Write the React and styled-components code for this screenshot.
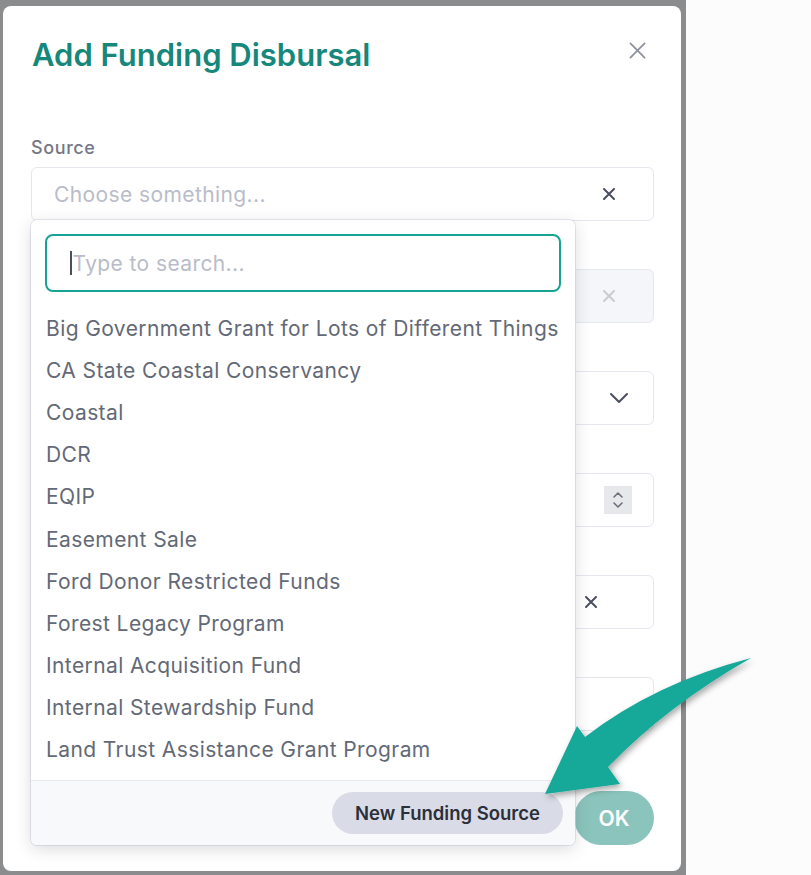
import React from 'react';
import styled, { createGlobalStyle } from 'styled-components';

const GlobalStyle = createGlobalStyle`
  html, body {
    margin: 0;
    padding: 0;
    background: #fcfcfc;
    font-family: Inter, "Noto Sans", sans-serif;
  }
  * { box-sizing: border-box; }
`;

const Page = styled.div`
  position: relative;
  display: flex;
  width: 811px;
  height: 875px;
  overflow: hidden;
`;

const Backdrop = styled.div`
  width: 686px;
  height: 875px;
  background: #8b8c8e;
  padding: 6px 5px 4px 3px;
`;

const Modal = styled.div`
  position: relative;
  height: 100%;
  background: #ffffff;
  border-radius: 8px;
  padding: 0 27px 0 28px;
  display: flex;
  flex-direction: column;
`;

const Header = styled.div`
  display: flex;
  justify-content: space-between;
  align-items: flex-start;
  padding: 30px 0 0 1px;
  height: 74px;
`;

const Title = styled.h1`
  margin: 0;
  font-size: 31px;
  line-height: 38px;
  font-weight: 600;
  color: #16877a;
`;

const CloseButton = styled.button`
  border: none;
  background: transparent;
  padding: 0;
  margin: 2px 5px 0 0;
  width: 24px;
  height: 24px;
  display: flex;
  align-items: center;
  justify-content: center;
  cursor: pointer;
`;

const Form = styled.div`
  display: flex;
  flex-direction: column;
  gap: 20px;
  padding-top: 59px;
`;

const Field = styled.div`
  display: flex;
  flex-direction: column;
  gap: 10px;
`;

const Label = styled.label`
  min-height: 18px;
  font-size: 18px;
  font-weight: 500;
  color: #747886;
  letter-spacing: 0.6px;
  line-height: 18px;
`;

const InputBox = styled.div`
  height: 54px;
  border: 1px solid #e6e7ee;
  border-radius: 6px;
  background: ${p => (p.disabled ? '#f5f6f9' : '#ffffff')};
  display: flex;
  align-items: center;
  justify-content: space-between;
  padding: 0 ${p => p.padRight || 38}px 0 22px;
`;

const Placeholder = styled.span`
  font-size: 21px;
  letter-spacing: 0.4px;
  color: #b9bcc9;
`;

const Spinner = styled.div`
  width: 28px;
  height: 28px;
  background: #e7e8ec;
  display: flex;
  flex-direction: column;
  align-items: center;
  justify-content: center;
  gap: 2px;
`;

const Footer = styled.div`
  margin-top: auto;
  display: flex;
  justify-content: flex-end;
  padding-bottom: 26px;
`;

const OkButton = styled.button`
  width: 80px;
  height: 54px;
  border: none;
  border-radius: 27px;
  background: #8bc4bc;
  color: #ffffff;
  font-family: inherit;
  font-size: 21px;
  font-weight: 600;
`;

const Popover = styled.div`
  position: absolute;
  left: 28px;
  top: 214px;
  width: 544px;
  height: 625px;
  background: #ffffff;
  border-radius: 6px;
  box-shadow: 0 4px 16px rgba(40, 44, 60, 0.17), 0 0 0 1px rgba(220, 222, 232, 0.6);
  display: flex;
  flex-direction: column;
  overflow: hidden;
`;

const SearchWrap = styled.div`
  padding: 14px 14px 15px 14px;
`;

const SearchInput = styled.div`
  height: 58px;
  border: 2px solid #17a394;
  border-radius: 8px;
  display: flex;
  align-items: center;
  padding-left: 23px;
  font-size: 21px;
  letter-spacing: 0.4px;
  color: #b9bcc9;
`;

const Caret = styled.span`
  display: inline-block;
  width: 1.5px;
  height: 24px;
  background: #4a4f5c;
  margin-right: 1px;
`;

const OptionList = styled.ul`
  list-style: none;
  margin: 0;
  padding: 0 0 9px 0;
  flex: 1;
`;

const Option = styled.li`
  height: 42.2px;
  display: flex;
  align-items: center;
  padding-left: 15px;
  font-size: 21px;
  letter-spacing: 0.4px;
  color: #636976;
  white-space: nowrap;
`;

const PopoverFooter = styled.div`
  border-top: 1px solid #e8e9f0;
  background: #f8f9fb;
  height: 65px;
  display: flex;
  justify-content: flex-end;
  align-items: center;
  padding-right: 12px;
`;

const NewButton = styled.button`
  height: 42px;
  padding: 0 23px;
  border: none;
  border-radius: 21px;
  background: #d9dbe6;
  color: #2b2f3a;
  font-family: inherit;
  font-size: 18.5px;
  font-weight: 600;
`;

const ArrowSvg = styled.svg`
  position: absolute;
  left: 0;
  top: 0;
  pointer-events: none;
`;

const XIcon = ({ size = 12, color = '#4b5060', width = 2 }) => (
  <svg width={size} height={size} viewBox="0 0 12 12">
    <path d="M1 1L11 11M11 1L1 11" stroke={color} strokeWidth={width} strokeLinecap="round" />
  </svg>
);

const Chevron = ({ up }) => (
  <svg width="12" height="8" viewBox="0 0 12 8">
    <path
      d={up ? 'M2 6L6 2L10 6' : 'M2 2L6 6L10 2'}
      fill="none"
      stroke="#6b6f7b"
      strokeWidth="1.6"
      strokeLinecap="round"
      strokeLinejoin="round"
    />
  </svg>
);

const options = [
  'Big Government Grant for Lots of Different Things',
  'CA State Coastal Conservancy',
  'Coastal',
  'DCR',
  'EQIP',
  'Easement Sale',
  'Ford Donor Restricted Funds',
  'Forest Legacy Program',
  'Internal Acquisition Fund',
  'Internal Stewardship Fund',
  'Land Trust Assistance Grant Program',
];

export default function App() {
  return (
    <>
      <GlobalStyle />
      <Page>
        <Backdrop>
          <Modal>
            <Header>
              <Title>Add Funding Disbursal</Title>
              <CloseButton aria-label="Close">
                <XIcon size={17} color="#8d909b" width={1.2} />
              </CloseButton>
            </Header>
            <Form>
              <Field>
                <Label>Source</Label>
                <InputBox>
                  <Placeholder>Choose something...</Placeholder>
                  <XIcon />
                </InputBox>
              </Field>
              {/* labels of the fields below sit under the open dropdown */}
              <Field>
                <Label />
                <InputBox disabled>
                  <Placeholder />
                  <XIcon color="#c9cbd3" />
                </InputBox>
              </Field>
              <Field>
                <Label />
                <InputBox padRight={24}>
                  <Placeholder />
                  <svg width="20" height="12" viewBox="0 0 20 12">
                    <path d="M2 2L10 10L18 2" fill="none" stroke="#4b5060" strokeWidth="2" strokeLinecap="round" strokeLinejoin="round" />
                  </svg>
                </InputBox>
              </Field>
              <Field>
                <Label />
                <InputBox padRight={21}>
                  <Placeholder />
                  <Spinner>
                    <Chevron up />
                    <Chevron />
                  </Spinner>
                </InputBox>
              </Field>
              <Field>
                <Label />
                <InputBox padRight={56}>
                  <Placeholder />
                  <XIcon />
                </InputBox>
              </Field>
              <Field>
                <Label />
                <InputBox />
              </Field>
            </Form>
            <Footer>
              <OkButton>OK</OkButton>
            </Footer>
            <Popover>
              <SearchWrap>
                <SearchInput>
                  <Caret />
                  Type to search...
                </SearchInput>
              </SearchWrap>
              <OptionList>
                {options.map(o => (
                  <Option key={o}>{o}</Option>
                ))}
              </OptionList>
              <PopoverFooter>
                <NewButton>New Funding Source</NewButton>
              </PopoverFooter>
            </Popover>
          </Modal>
        </Backdrop>
        <ArrowSvg width="811" height="875" viewBox="0 0 811 875">
          <defs>
            <filter id="arrowShadow" x="-20%" y="-20%" width="140%" height="140%">
              <feDropShadow dx="2" dy="3" stdDeviation="3" floodColor="#000" floodOpacity="0.35" />
            </filter>
          </defs>
          <path
            d="M751 658 Q655 683 585 737 L577 726 L545 794 L620 784 L608 767 Q668 705 751 658 Z"
            fill="#16a898"
            filter="url(#arrowShadow)"
          />
        </ArrowSvg>
      </Page>
    </>
  );
}
